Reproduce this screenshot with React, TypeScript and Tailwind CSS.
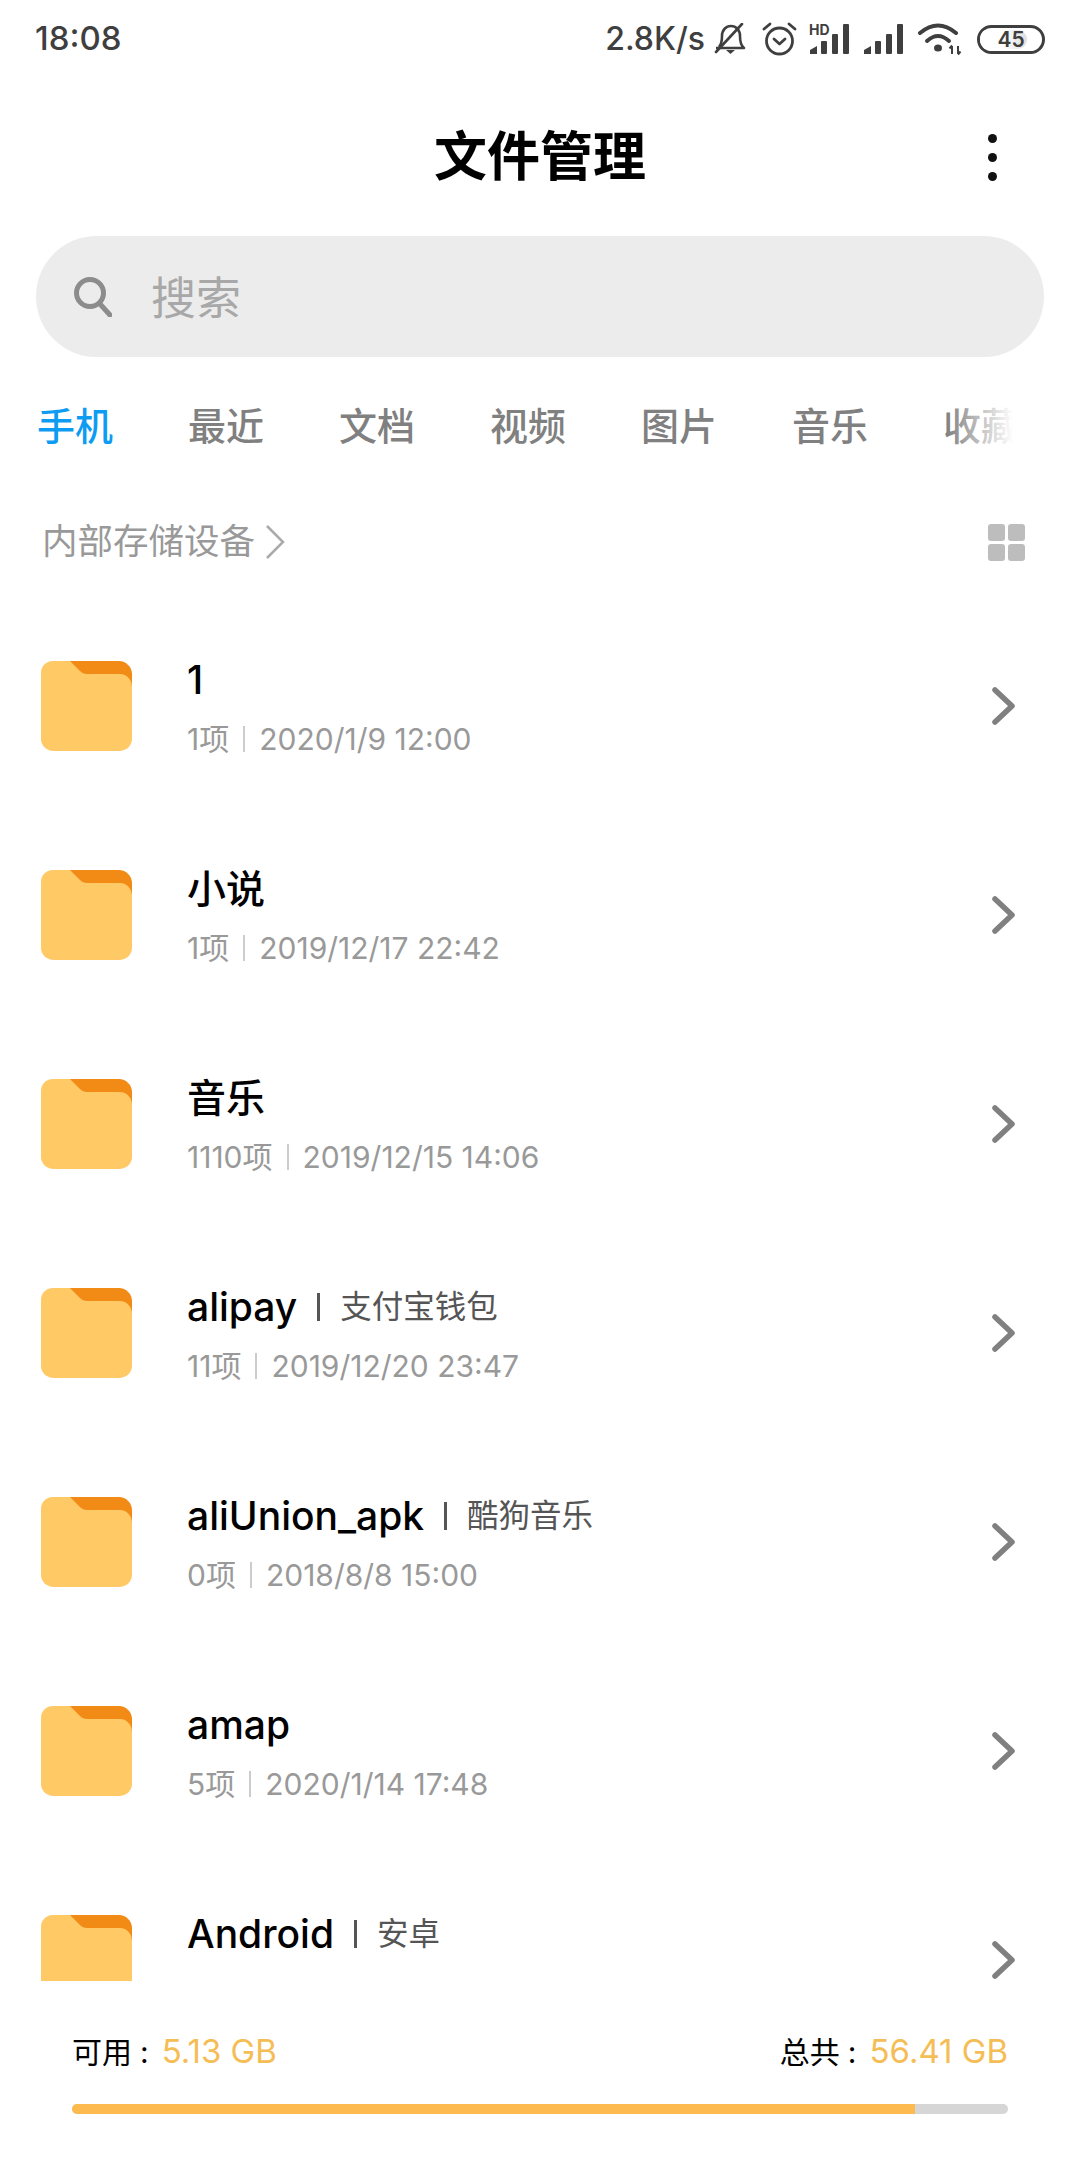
const FONT = "font-['Inter','Noto_Sans_CJK_SC',sans-serif]";

type Folder = { name: string; alias?: string; count?: string; date?: string };

const folders: Folder[] = [
  { name: "1", count: "1项", date: "2020/1/9 12:00" },
  { name: "小说", count: "1项", date: "2019/12/17 22:42" },
  { name: "音乐", count: "1110项", date: "2019/12/15 14:06" },
  { name: "alipay", alias: "支付宝钱包", count: "11项", date: "2019/12/20 23:47" },
  { name: "aliUnion_apk", alias: "酷狗音乐", count: "0项", date: "2018/8/8 15:00" },
  { name: "amap", count: "5项", date: "2020/1/14 17:48" },
  { name: "Android", alias: "安卓" },
];

const tabs = ["手机", "最近", "文档", "视频", "图片", "音乐", "收藏"];

const FolderIcon = () => (
  <svg width="91" height="90" viewBox="0 0 91 90" className="mb-[1px] shrink-0">
    <path d="M28 0H78C85 0 91 6 91 13V26L40 16Z" fill="#f28b15" />
    <path
      d="M12 0H29L39 10C41 12 43 13 46 13H79C86 13 91 19 91 26V78C91 85 85 90 78 90H13C6 90 0 85 0 78V12C0 5 5 0 12 0Z"
      fill="#ffc966"
    />
  </svg>
);

const Chevron = () => (
  <svg width="24" height="38" viewBox="0 0 24 38" fill="none" className="mb-[2px] shrink-0">
    <path d="M3 3L20 19L3 35" stroke="#808080" strokeWidth="5.5" strokeLinecap="round" strokeLinejoin="round" />
  </svg>
);

const Signal = ({ hd }: { hd?: boolean }) => (
  <div className="relative h-[30px] w-[40px]">
    {hd && <span className="absolute left-[-1px] top-0 text-[14px] font-bold leading-[11px]">HD</span>}
    <svg width="40" height="30" viewBox="0 0 40 30" fill="#3f3f3f">
      <path d="M0 30V26L7 22V30Z" />
      <rect x="11" y="17" width="6" height="13" rx="1" />
      <rect x="22" y="10" width="6" height="20" rx="1" />
      <rect x="33" y="0" width="6" height="30" rx="1" />
    </svg>
  </div>
);

const StatusBar = () => (
  <div className="flex h-[78px] shrink-0 items-center justify-between pl-[35px] pr-[35px] text-[#3f3f3f]">
    <span className="text-[33px] font-medium">18:08</span>
    <div className="flex items-center">
      <span className="mr-[9px] text-[32px] font-medium">2.8K/s</span>
      {/* bell muted */}
      <svg width="32" height="32" viewBox="0 0 32 32" fill="none" stroke="#3f3f3f" strokeWidth="2.6" className="mr-[16px]">
        <path d="M5 24C8 21 8 17 8 13C8 7 12 3 17 3C22 3 26 7 26 13C26 17 26 22 30 25H2" strokeLinejoin="round" />
        <path d="M12 27H21L16.5 31Z" fill="#3f3f3f" stroke="none" />
        <path d="M2 29L28 1" strokeLinecap="round" />
      </svg>
      {/* alarm */}
      <svg width="35" height="34" viewBox="0 0 35 34" fill="none" stroke="#3f3f3f" strokeWidth="2.8" className="mr-[13px]">
        <circle cx="17.5" cy="19" r="13" />
        <path d="M12 17L17.5 22L23 17" strokeLinecap="round" strokeLinejoin="round" />
        <path d="M2 7L8 2M33 7L27 2" strokeLinecap="round" />
      </svg>
      <div className="mr-[14px]">
        <Signal hd />
      </div>
      <div className="mr-[14px]">
        <Signal />
      </div>
      {/* wifi */}
      <svg width="44" height="34" viewBox="0 0 44 34" fill="none" stroke="#3f3f3f" strokeWidth="4" className="mr-[15px]">
        <path d="M2 11Q20 -4 38 11" strokeLinecap="round" />
        <path d="M9 19Q20 9 31 19" strokeLinecap="round" />
        <ellipse cx="20" cy="26" rx="4" ry="3.5" fill="#3f3f3f" stroke="none" />
        <path d="M34 32V24M31.5 26.5L34 23.5M40 24V32M42.5 29.5L40 32.5" strokeWidth="2" />
      </svg>
      {/* battery */}
      <div className="relative flex h-[29px] w-[68px] items-center justify-center overflow-hidden rounded-full border-[3px] border-[#3f3f3f]">
        <div className="absolute bottom-[2px] left-0 top-[2px] w-[47px] rounded-r-full bg-gradient-to-r from-white from-50% to-[#dedede]" />
        <span className="relative text-[21px] font-semibold leading-none">45</span>
      </div>
    </div>
  </div>
);

const Row = ({ folder }: { folder: Folder }) => (
  <div className="flex h-[209px] items-center pl-[41px] pr-[64px]">
    <FolderIcon />
    <div className="ml-[55px] flex-1">
      <div className="flex h-[46px] items-center text-[39px] font-medium leading-none text-black">
        <span>{folder.name}</span>
        {folder.alias && (
          <>
            <span className="mx-[20px] h-[28px] w-[3px] bg-[#555555]" />
            <span className="text-[31.5px] font-normal text-[#555555]">{folder.alias}</span>
          </>
        )}
      </div>
      <div className="mt-[18px] flex h-[36px] items-center text-[30px] leading-none text-[#999999]">
        {folder.count && (
          <>
            <span>{folder.count}</span>
            <span className="mx-[14px] h-[26px] w-[2px] bg-[#cccccc]" />
            <span>{folder.date}</span>
          </>
        )}
      </div>
    </div>
    <Chevron />
  </div>
);

export default function App() {
  return (
    <div className={`${FONT} flex h-[2160px] w-[1080px] flex-col overflow-hidden bg-white`}>
      <StatusBar />

      {/* title */}
      <div className="grid h-[158px] shrink-0 grid-cols-[1fr_auto_1fr] items-center">
        <div />
        <h1 className="text-[53px] font-bold leading-none text-black">文件管理</h1>
        <div className="flex flex-col items-end gap-[10px] pr-[83px]">
          <div className="h-[9px] w-[9px] rounded-full bg-[#111111]" />
          <div className="h-[9px] w-[9px] rounded-full bg-[#111111]" />
          <div className="h-[9px] w-[9px] rounded-full bg-[#111111]" />
        </div>
      </div>

      {/* search */}
      <div className="mx-[36px] flex h-[121px] shrink-0 items-center rounded-full bg-[#ececec] pl-[38px]">
        <svg width="38" height="40" viewBox="0 0 38 40" fill="none" stroke="#8c8c8c" strokeWidth="5">
          <circle cx="16" cy="16" r="13.5" />
          <path d="M26 27L36 38" strokeLinecap="round" />
        </svg>
        <span className="ml-[39px] mt-[3px] text-[45px] leading-none text-[#a8a8a8]">搜索</span>
      </div>

      {/* tabs */}
      <div className="relative flex h-[139px] shrink-0 items-center gap-[75px] overflow-hidden pl-[37px] text-[38px] font-medium text-[#808080]">
        {tabs.map((tab, i) => (
          <span key={tab} className={`shrink-0 ${i === 0 ? "text-[#0e9cf3]" : ""}`}>
            {tab}
          </span>
        ))}
        <div className="absolute bottom-[10px] right-0 top-[10px] w-[134px] bg-gradient-to-r from-transparent via-white via-50% to-white" />
      </div>

      {/* breadcrumb */}
      <div className="mt-[16px] flex h-[60px] shrink-0 items-center justify-between pl-[42px] pr-[55px]">
        <div className="flex items-center text-[35.5px] text-[#999999]">
          <span>内部存储设备</span>
          <svg width="22" height="38" viewBox="0 0 22 38" fill="none" className="ml-[9px]">
            <path d="M3 3L19 19L3 35" stroke="#aaaaaa" strokeWidth="2.5" />
          </svg>
        </div>
        <div className="grid grid-cols-2 gap-[3px]">
          <div className="h-[17px] w-[17px] rounded-[3px] bg-[#bdbdbd]" />
          <div className="h-[17px] w-[17px] rounded-[3px] bg-[#bdbdbd]" />
          <div className="h-[17px] w-[17px] rounded-[3px] bg-[#bdbdbd]" />
          <div className="h-[17px] w-[17px] rounded-[3px] bg-[#bdbdbd]" />
        </div>
      </div>

      {/* folder list, clipped by the storage footer */}
      <div className="mt-[30px] flex-1 overflow-hidden">
        {folders.map((folder) => (
          <Row key={folder.name} folder={folder} />
        ))}
      </div>

      {/* storage */}
      <div className="h-[179px] shrink-0 px-[72px] pt-[50px]">
        <div className="flex items-center justify-between text-[30px] leading-[40px] text-black">
          <span>
            可用<span className="ml-[8px] mr-[13px]">:</span>
            <span className="text-[33px] text-[#f5bd55]">5.13 GB</span>
          </span>
          <span>
            总共<span className="ml-[8px] mr-[13px]">:</span>
            <span className="text-[33px] text-[#f5bd55]">56.41 GB</span>
          </span>
        </div>
        <div className="mt-[32px] h-[10px] overflow-hidden rounded-full bg-[#d6d6d6]">
          <div className="h-full w-[90.1%] bg-[#fdbb4f]" />
        </div>
      </div>
    </div>
  );
}
